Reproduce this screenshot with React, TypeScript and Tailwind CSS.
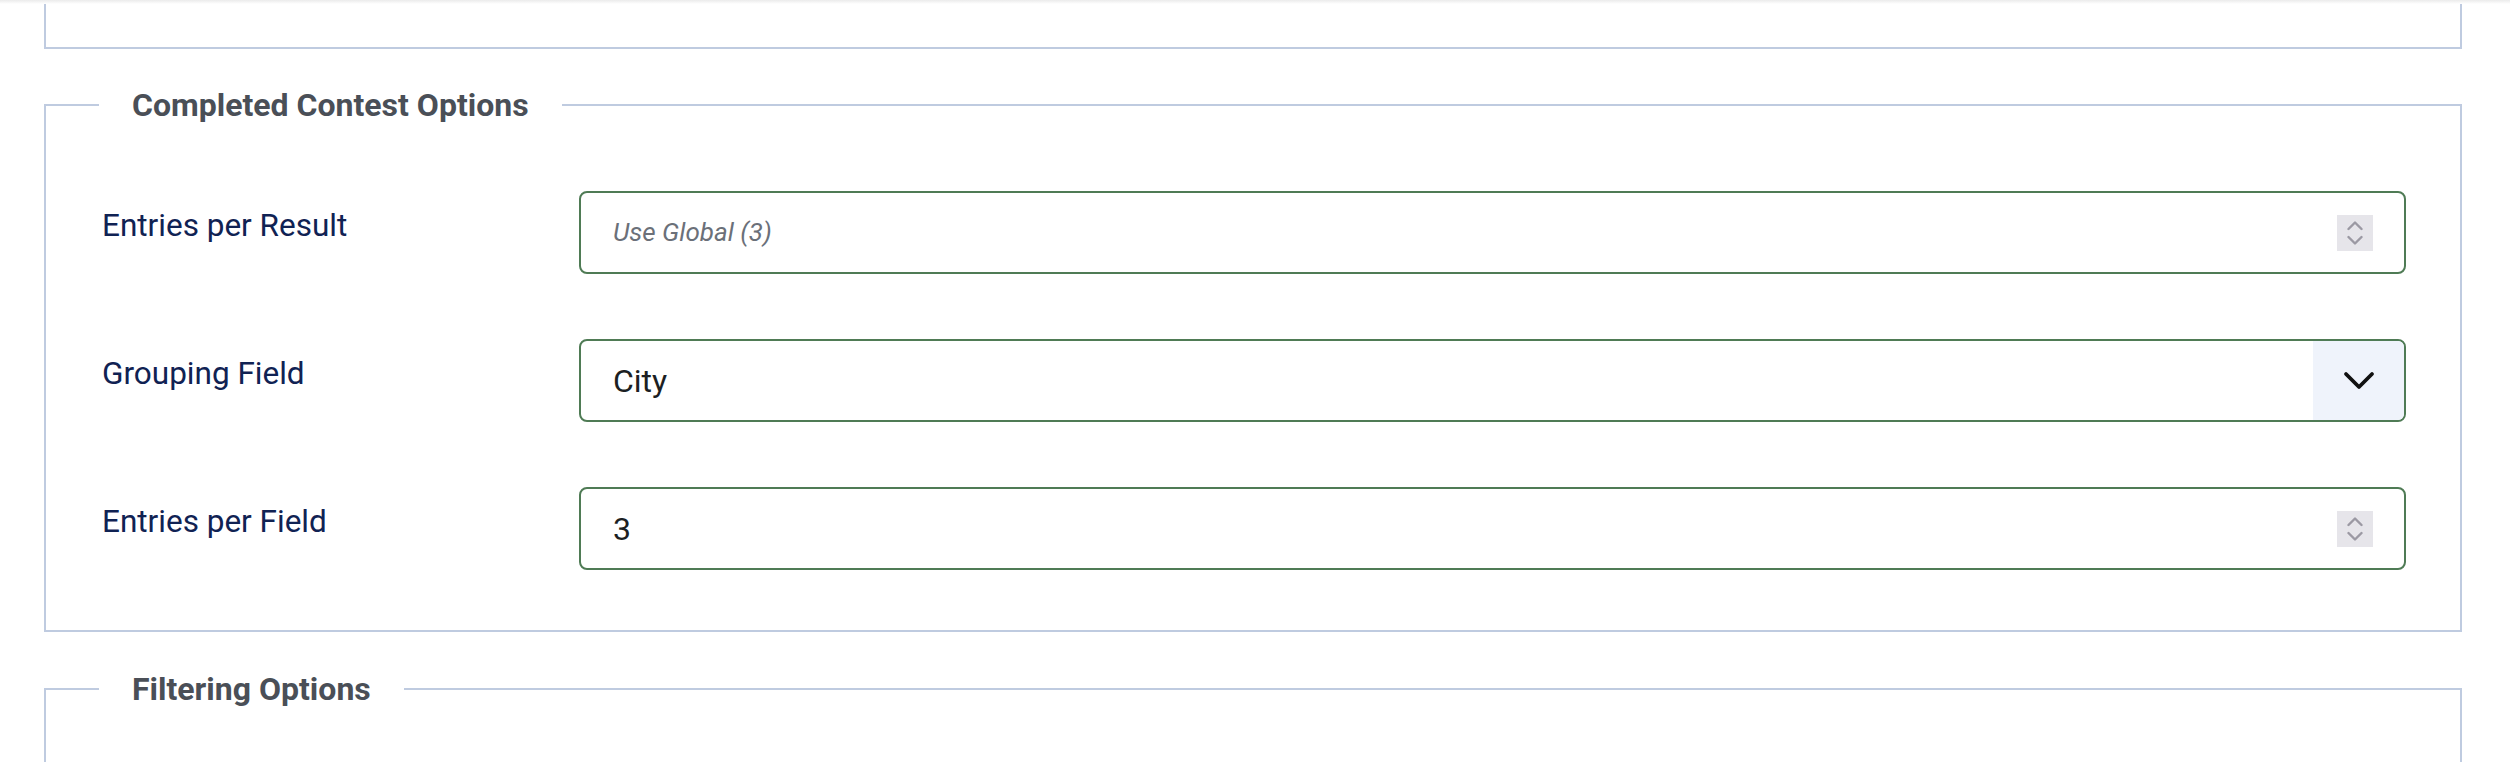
import React from "react";

function Spinner() {
  return (
    <div className="flex h-[36px] w-[36px] shrink-0 items-center justify-center bg-[#e6e5ea]">
      <svg width="16" height="26" viewBox="0 0 16 26" fill="none" stroke="#9b99a3" strokeWidth="2.4" strokeLinecap="round" strokeLinejoin="round">
        <polyline points="1.5,9 8,2.5 14.5,9" />
        <polyline points="1.5,17 8,23.5 14.5,17" />
      </svg>
    </div>
  );
}

function NumberField({ value, placeholder }: { value?: string; placeholder?: string }) {
  return (
    <div className="flex h-[83px] items-center rounded-[8px] border-2 border-[#4f7b55] bg-white pl-[32px] pr-[31px]">
      {value ? (
        <span className="flex-1 text-[32px] text-[#1c1f23]">{value}</span>
      ) : (
        <span className="flex-1 text-[26px] italic text-[#6b7079]">{placeholder}</span>
      )}
      <Spinner />
    </div>
  );
}

function SelectField({ value }: { value: string }) {
  return (
    <div className="flex h-[83px] items-stretch overflow-hidden rounded-[8px] border-2 border-[#4f7b55] bg-white">
      <span className="flex flex-1 items-center pl-[32px] text-[32px] text-[#1c1f23]">{value}</span>
      <div className="flex w-[91px] items-center justify-center bg-[#eff3fb]">
        <svg width="32" height="20" viewBox="0 0 32 20" fill="none" stroke="#111" strokeWidth="3.8" strokeLinecap="round" strokeLinejoin="round">
          <polyline points="3,3 16,16 29,3" />
        </svg>
      </div>
    </div>
  );
}

function Row({ label, children }: { label: string; children: React.ReactNode }) {
  return (
    <div className="grid grid-cols-[477px_1fr]">
      <label className="pt-[12px] text-[31.5px] leading-[46px] text-[#102253]">{label}</label>
      {children}
    </div>
  );
}

function Legend({ children }: { children: React.ReactNode }) {
  return (
    <legend className="ml-[-3px] px-[33px] text-[32px] font-bold leading-[38px] text-[#4a4f57]">
      {children}
    </legend>
  );
}

export default function App() {
  return (
    <div className="relative min-h-[762px] overflow-hidden bg-white font-[Roboto,'Noto_Sans',sans-serif]">
      <div className="pointer-events-none absolute inset-x-0 top-0 h-[4px] bg-gradient-to-b from-[#ebebeb] to-white" />

      <div className="ml-[44px] mr-[48px] h-[49px] border-x-2 border-b-2 border-[#bfcbe0]" />

      <fieldset className="ml-[44px] mr-[48px] mt-[37px] border-2 border-[#bfcbe0] pb-[60px] pl-[56px] pr-[54px]">
        <Legend>Completed Contest Options</Legend>
        <div className="flex flex-col gap-[65px] pt-[67px]">
          <Row label="Entries per Result">
            <NumberField placeholder="Use Global (3)" />
          </Row>
          <Row label="Grouping Field">
            <SelectField value="City" />
          </Row>
          <Row label="Entries per Field">
            <NumberField value="3" />
          </Row>
        </div>
      </fieldset>

      <fieldset className="ml-[44px] mr-[48px] mt-[38px] h-[200px] border-2 border-[#bfcbe0] pl-[56px] pr-[54px]">
        <Legend>Filtering Options</Legend>
      </fieldset>
    </div>
  );
}
